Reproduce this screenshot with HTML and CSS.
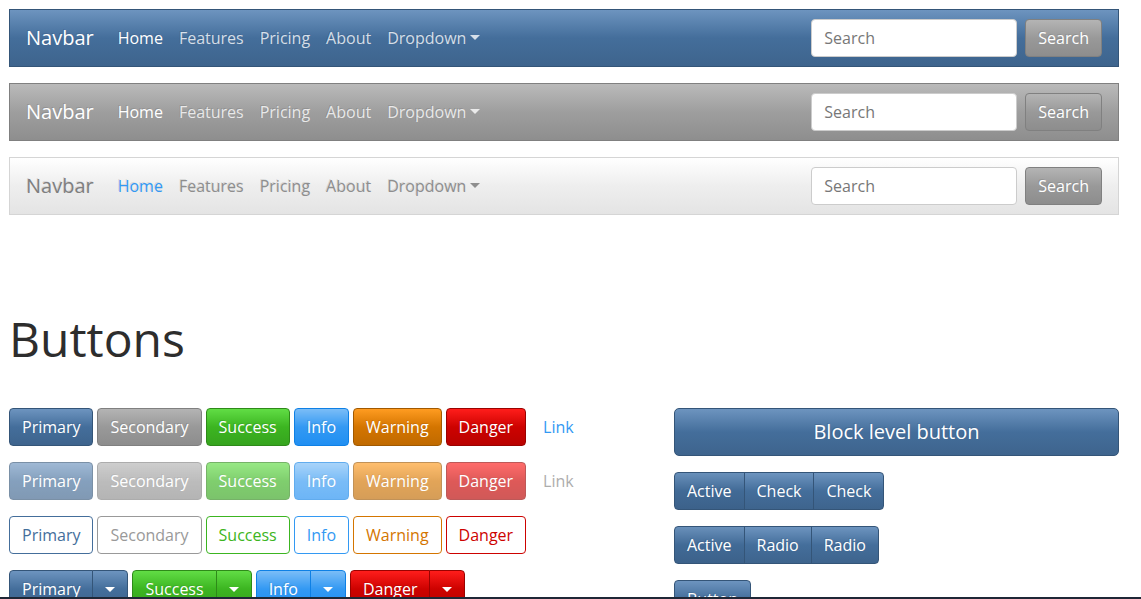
FILE: index.html
```html
<!DOCTYPE html>
<html lang="en">
<head>
<meta charset="utf-8">
<title>Spacelab</title>
<link rel="stylesheet" href="styles.css">
</head>
<body>
<div class="container">
  <section class="navbars">
    <nav class="navbar navbar-primary">
      <a class="brand">Navbar</a>
      <ul class="nav">
        <li class="nav-link active">Home</li>
        <li class="nav-link">Features</li>
        <li class="nav-link">Pricing</li>
        <li class="nav-link">About</li>
        <li class="nav-link caret">Dropdown</li>
      </ul>
      <form class="search">
        <input class="search-input" type="text" placeholder="Search">
        <button class="btn btn-secondary" type="button">Search</button>
      </form>
    </nav>
    <nav class="navbar navbar-secondary">
      <a class="brand">Navbar</a>
      <ul class="nav">
        <li class="nav-link active">Home</li>
        <li class="nav-link">Features</li>
        <li class="nav-link">Pricing</li>
        <li class="nav-link">About</li>
        <li class="nav-link caret">Dropdown</li>
      </ul>
      <form class="search">
        <input class="search-input" type="text" placeholder="Search">
        <button class="btn btn-secondary" type="button">Search</button>
      </form>
    </nav>
    <nav class="navbar navbar-light">
      <a class="brand">Navbar</a>
      <ul class="nav">
        <li class="nav-link active">Home</li>
        <li class="nav-link">Features</li>
        <li class="nav-link">Pricing</li>
        <li class="nav-link">About</li>
        <li class="nav-link caret">Dropdown</li>
      </ul>
      <form class="search">
        <input class="search-input" type="text" placeholder="Search">
        <button class="btn btn-secondary" type="button">Search</button>
      </form>
    </nav>
  </section>

  <section class="buttons-section">
    <h1 class="page-title">Buttons</h1>
    <div class="row">
      <div class="col-left">
        <div class="btn-row">
          <button class="btn btn-primary">Primary</button>
          <button class="btn btn-secondary">Secondary</button>
          <button class="btn btn-success">Success</button>
          <button class="btn btn-info">Info</button>
          <button class="btn btn-warning">Warning</button>
          <button class="btn btn-danger">Danger</button>
          <button class="btn btn-link">Link</button>
        </div>
        <div class="btn-row disabled">
          <button class="btn btn-primary">Primary</button>
          <button class="btn btn-secondary">Secondary</button>
          <button class="btn btn-success">Success</button>
          <button class="btn btn-info">Info</button>
          <button class="btn btn-warning">Warning</button>
          <button class="btn btn-danger">Danger</button>
          <button class="btn btn-link link-disabled">Link</button>
        </div>
        <div class="btn-row">
          <button class="btn btn-outline-primary">Primary</button>
          <button class="btn btn-outline-secondary">Secondary</button>
          <button class="btn btn-outline-success">Success</button>
          <button class="btn btn-outline-info">Info</button>
          <button class="btn btn-outline-warning">Warning</button>
          <button class="btn btn-outline-danger">Danger</button>
        </div>
        <div class="btn-row">
          <div class="btn-group">
            <button class="btn btn-primary">Primary</button>
            <button class="btn btn-primary split"><span class="caret-only"></span></button>
          </div>
          <div class="btn-group">
            <button class="btn btn-success">Success</button>
            <button class="btn btn-success split"><span class="caret-only"></span></button>
          </div>
          <div class="btn-group">
            <button class="btn btn-info">Info</button>
            <button class="btn btn-info split"><span class="caret-only"></span></button>
          </div>
          <div class="btn-group">
            <button class="btn btn-danger">Danger</button>
            <button class="btn btn-danger split"><span class="caret-only"></span></button>
          </div>
        </div>
      </div>
      <div class="col-right">
        <button class="btn btn-primary btn-lg btn-block">Block level button</button>
        <div class="btn-group group-block">
          <button class="btn btn-primary active-btn">Active</button>
          <button class="btn btn-primary">Check</button>
          <button class="btn btn-primary">Check</button>
        </div>
        <div class="btn-group group-block">
          <button class="btn btn-primary active-btn">Active</button>
          <button class="btn btn-primary">Radio</button>
          <button class="btn btn-primary">Radio</button>
        </div>
        <div class="btn-group-vertical">
          <button class="btn btn-primary">Button</button>
          <button class="btn btn-primary">Button</button>
        </div>
      </div>
    </div>
  </section>
</div>
<div class="bottom-edge"></div>
</body>
</html>
```
FILE: styles.css
```css
html, body {
  margin: 0;
  padding: 0;
  height: 100%;
  overflow: hidden;
}
body {
  font-family: "Open Sans", "Liberation Sans", sans-serif;
  font-size: 16px;
  line-height: 1.5;
  color: #2d2d2d;
  background: #fff;
}
.container {
  width: 1110px;
  margin-left: 9px;
  padding-top: 9px;
}

/* Navbars */
.navbars {
  display: flex;
  flex-direction: column;
  gap: 16px;
}
.navbar {
  display: flex;
  align-items: center;
  padding: 8px 16px;
  border-radius: 0;
  height: 40px;
}
.navbar-primary {
  background-image: linear-gradient(#6d94bf, #446e9b 50%, #3e648d);
  border: 1px solid #345578;
}
.navbar-secondary {
  background-image: linear-gradient(#bababa, #9e9e9e 50%, #8e8e8e);
  border: 1px solid #808080;
}
.navbar-light {
  background-image: linear-gradient(#ffffff, #eeeeee 50%, #e4e4e4);
  border: 1px solid #d5d5d5;
}
.brand {
  font-size: 20px;
  line-height: 30px;
  padding: 5px 0;
  margin-right: 16px;
  color: #fff;
  text-shadow: -1px -1px 0 rgba(0,0,0,0.1);
}
.nav {
  display: flex;
  list-style: none;
  margin: 0;
  padding: 0;
  flex: 1;
}
.nav-link {
  padding: 8px 8px;
  color: rgba(255,255,255,0.78);
  text-shadow: -1px -1px 0 rgba(0,0,0,0.1);
}
.nav-link.active {
  color: #fff;
}
.navbar-light .brand {
  color: #7f7f7f;
}
.navbar-light .nav-link {
  color: #8e8e8e;
}
.navbar-light .nav-link.active {
  color: #3399f3;
}
.caret::after {
  content: "";
  display: inline-block;
  margin-left: 4px;
  vertical-align: 4px;
  border-top: 5px solid;
  border-left: 5px solid transparent;
  border-right: 5px solid transparent;
}
.search {
  display: flex;
  align-items: center;
  margin: 0;
}
.search-input {
  box-sizing: border-box;
  width: 206px;
  height: 38px;
  padding: 6px 12px;
  font-family: inherit;
  font-size: 16px;
  color: #333;
  background: #fff;
  border: 1px solid #ccc;
  border-radius: 4px;
  margin-right: 8px;
}
.search-input::placeholder {
  color: #777;
}

/* Buttons */
.btn {
  box-sizing: border-box;
  font-family: inherit;
  font-size: 16px;
  line-height: 24px;
  padding: 6px 12px;
  border: 1px solid transparent;
  border-radius: 4px;
  color: #fff;
  text-shadow: -1px -1px 0 rgba(0,0,0,0.1);
  background: transparent;
  cursor: pointer;
  white-space: nowrap;
}
.btn-primary {
  background-image: linear-gradient(#6d94bf, #446e9b 50%, #3e648d);
  border-color: #345578;
}
.btn-secondary {
  background-image: linear-gradient(#b4b4b4, #999 50%, #8d8d8d);
  border-color: #808080;
}
.btn-success {
  background-image: linear-gradient(#61dd45, #3cb521 50%, #36a41e);
  border-color: #2e8a19;
}
.btn-info {
  background-image: linear-gradient(#7bbdf7, #3399f3 50%, #208ff2);
  border-color: #0e80e5;
}
.btn-warning {
  background-image: linear-gradient(#ff9c21, #d47500 50%, #c06a00);
  border-color: #a15900;
}
.btn-danger {
  background-image: linear-gradient(#ff1d1b, #cd0200 50%, #b90200);
  border-color: #9a0200;
}
.btn-link {
  color: #3399f3;
  text-shadow: none;
  border-color: transparent;
}
.btn-outline-primary { color: #446e9b; border-color: #446e9b; text-shadow: none; }
.btn-outline-secondary { color: #999; border-color: #999; text-shadow: none; }
.btn-outline-success { color: #3cb521; border-color: #3cb521; text-shadow: none; }
.btn-outline-info { color: #3399f3; border-color: #3399f3; text-shadow: none; }
.btn-outline-warning { color: #d47500; border-color: #d47500; text-shadow: none; }
.btn-outline-danger { color: #cd0200; border-color: #cd0200; text-shadow: none; }

.disabled .btn {
  opacity: 0.65;
}
.disabled .link-disabled {
  color: #999;
  opacity: 0.8;
}

.page-title {
  font-size: 48px;
  font-weight: 400;
  line-height: 57.6px;
  margin: 95px 0 40px 0;
  color: #2d2d2d;
}

.row {
  display: grid;
  grid-template-columns: 635px 445px;
  column-gap: 30px;
}
.btn-row {
  display: flex;
  flex-wrap: nowrap;
  gap: 4px;
  margin-bottom: 16px;
}
.btn-group {
  display: inline-flex;
}
.btn-group .btn + .btn {
  margin-left: -1px;
  border-top-left-radius: 0;
  border-bottom-left-radius: 0;
}
.btn-group .btn:not(:last-child) {
  border-top-right-radius: 0;
  border-bottom-right-radius: 0;
}
.split {
  padding-left: 12px;
  padding-right: 12px;
}
.caret-only {
  display: inline-block;
  vertical-align: 3px;
  border-top: 5px solid #fff;
  border-left: 5px solid transparent;
  border-right: 5px solid transparent;
}

.col-right {
  display: flex;
  flex-direction: column;
  align-items: flex-start;
}
.btn-lg {
  font-size: 20px;
  line-height: 30px;
  padding: 8px 16px;
  border-radius: 5px;
}
.btn-block {
  width: 100%;
  margin-bottom: 16px;
}
.group-block {
  margin-bottom: 16px;
}
.active-btn {
  background-image: linear-gradient(#6990ba, #416a96 50%, #3c618a);
}
.btn-group-vertical {
  display: inline-flex;
  flex-direction: column;
}
.btn-group-vertical .btn:first-child {
  border-bottom-left-radius: 0;
  border-bottom-right-radius: 0;
}
.btn-group-vertical .btn + .btn {
  margin-top: -1px;
  border-top-left-radius: 0;
  border-top-right-radius: 0;
}

.bottom-edge {
  position: fixed;
  left: 0;
  right: 0;
  bottom: 0;
  height: 2px;
  background: #1f2736;
}
```
